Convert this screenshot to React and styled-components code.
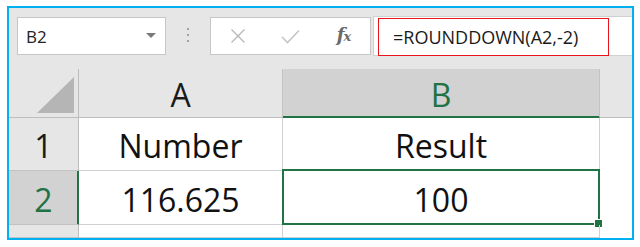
import React from 'react'
import styled, { createGlobalStyle } from 'styled-components'

const GREEN = '#217346'

const GlobalStyle = createGlobalStyle`
  body {
    margin: 0;
    background: #fff;
    font-family: 'Open Sans', 'Noto Sans', sans-serif;
  }
`

const Frame = styled.div`
  margin: 6px 0 0 7px;
  width: 627px;
  height: 234px;
  box-sizing: border-box;
  border: 2px solid #00b0f0;
  background: #e6e6e6;
  display: flex;
  flex-direction: column;
  overflow: hidden;
`

const Toolbar = styled.div`
  height: 61px;
  flex: none;
  box-sizing: border-box;
  padding: 9px 0 0 8px;
  display: flex;
  align-items: flex-start;
`

const NameBox = styled.div`
  width: 149px;
  height: 38px;
  box-sizing: border-box;
  border: 1px solid #c6c6c6;
  background: #fff;
  display: flex;
  align-items: center;
  justify-content: space-between;
  padding: 1px 9px 0 8px;
  font-size: 17px;
  color: #222;
`

const Caret = styled.span`
  width: 0;
  height: 0;
  border-left: 5px solid transparent;
  border-right: 5px solid transparent;
  border-top: 5px solid #7a7a7a;
  margin-top: -2px;
`

const Grip = styled.div`
  width: 2px;
  height: 14px;
  margin: 11px 21px 0 21px;
  display: flex;
  flex-direction: column;
  justify-content: space-between;

  span {
    width: 2px;
    height: 2px;
    background: #a3a3a3;
  }
`

const Buttons = styled.div`
  width: 161px;
  height: 38px;
  box-sizing: border-box;
  border: 1px solid #c6c6c6;
  background: #fff;
  display: grid;
  grid-template-columns: repeat(3, 1fr);
`

const BarButton = styled.div`
  display: flex;
  align-items: center;
  justify-content: center;
`

const Fx = styled.span`
  font-family: 'DejaVu Serif', 'Liberation Serif', serif;
  font-style: italic;
  font-weight: bold;
  font-size: 18px;
  color: #6a6a6a;
  letter-spacing: -1px;
  margin-top: -3px;

  span {
    font-size: 13px;
  }
`

const FormulaInput = styled.div`
  flex: 1;
  height: 40px;
  margin: -1px 0 0 2px;
  box-sizing: border-box;
  border: 1px solid #d0d0d0;
  border-right: none;
  background: #fff;
  position: relative;
  display: flex;
  align-items: center;
  padding: 1px 0 0 19px;
  font-size: 18px;
  color: #1a1a1a;
`

const Highlight = styled.div`
  position: absolute;
  left: 4px;
  top: 1px;
  width: 231px;
  height: 38px;
  box-sizing: border-box;
  border: 1px solid #e8141b;
  pointer-events: none;
`

const Sheet = styled.div`
  flex: 1;
  display: grid;
  grid-template-columns: 70px 204px 317px 1fr;
  grid-template-rows: 49px 53px 54px 1fr;
  background: #fff;
`

const CellBase = styled.div`
  box-sizing: border-box;
  display: flex;
  align-items: center;
  justify-content: center;
  padding-top: 4px;
  font-size: 32px;
  line-height: 1;
`

const Corner = styled(CellBase)`
  background: #e6e6e6;
  border-right: 1px solid #bdbdbd;
  border-bottom: 1px solid #bdbdbd;
  justify-content: flex-end;
  align-items: flex-end;
  padding: 0 4px 4px 0;
`

const CornerMark = styled.div`
  width: 37px;
  height: 36px;
  background: #b5b5b5;
  clip-path: polygon(100% 0, 100% 100%, 0 100%);
`

const ColHeader = styled(CellBase)`
  background: ${(p) => (p.$active ? '#d2d2d2' : '#e6e6e6')};
  color: ${(p) => (p.$active ? GREEN : '#1a1a1a')};
  border-right: ${(p) => (p.$last ? 'none' : '1px solid #c3c3c3')};
  border-bottom: 1px solid ${(p) => (p.$active ? GREEN : '#bdbdbd')};
  box-shadow: ${(p) => (p.$active ? `inset 0 -1px 0 ${GREEN}` : 'none')};
`

const RowHeader = styled(CellBase)`
  background: ${(p) => (p.$active ? '#d2d2d2' : '#e6e6e6')};
  color: ${(p) => (p.$active ? GREEN : '#1a1a1a')};
  border-right: 1px solid ${(p) => (p.$active ? GREEN : '#bdbdbd')};
  border-bottom: 1px solid #c3c3c3;
  box-shadow: ${(p) => (p.$active ? `inset -1px 0 0 ${GREEN}` : 'none')};
`

const Cell = styled(CellBase)`
  position: relative;
  color: #111;
  border-right: ${(p) => (p.$last ? 'none' : '1px solid #d0d0d0')};
  border-bottom: ${(p) => (p.$last ? 'none' : '1px solid #d0d0d0')};
`

const Selection = styled.div`
  position: absolute;
  top: -2px;
  left: -1px;
  right: -1px;
  bottom: -1px;
  border: 2px solid ${GREEN};
  pointer-events: none;
`

const FillHandle = styled.div`
  position: absolute;
  right: -4px;
  bottom: -4px;
  width: 7px;
  height: 7px;
  background: ${GREEN};
  outline: 1px solid #fff;
`

const rows = [
  { n: '1', a: 'Number', b: 'Result' },
  { n: '2', a: '116.625', b: '100', active: true },
  { n: '', a: '', b: '' },
]

export default function App() {
  return (
    <>
      <GlobalStyle />
      <Frame>
        <Toolbar>
          <NameBox>
            B2
            <Caret />
          </NameBox>
          <Grip>
            <span />
            <span />
            <span />
          </Grip>
          <Buttons>
            <BarButton>
              <svg width="16" height="16" viewBox="0 0 16 16">
                <path d="M1.5 1.5 L14.5 14.5 M14.5 1.5 L1.5 14.5" stroke="#b8b8b8" strokeWidth="1.4" fill="none" />
              </svg>
            </BarButton>
            <BarButton>
              <svg width="19" height="15" viewBox="0 0 19 15">
                <path d="M1 8 L6.5 13.5 L18 1.5" stroke="#c6c6c6" strokeWidth="1.6" fill="none" />
              </svg>
            </BarButton>
            <BarButton>
              <Fx>
                f<span>x</span>
              </Fx>
            </BarButton>
          </Buttons>
          <FormulaInput>
            =ROUNDDOWN(A2,-2)
            <Highlight />
          </FormulaInput>
        </Toolbar>

        <Sheet>
          <Corner>
            <CornerMark />
          </Corner>
          <ColHeader>A</ColHeader>
          <ColHeader $active>B</ColHeader>
          <ColHeader $last />

          {rows.map((r, i) => (
            <React.Fragment key={i}>
              <RowHeader $active={r.active}>{r.n}</RowHeader>
              <Cell>{r.a}</Cell>
              <Cell>
                {r.b}
                {r.active && (
                  <Selection>
                    <FillHandle />
                  </Selection>
                )}
              </Cell>
              <Cell $last />
            </React.Fragment>
          ))}
        </Sheet>
      </Frame>
    </>
  )
}
